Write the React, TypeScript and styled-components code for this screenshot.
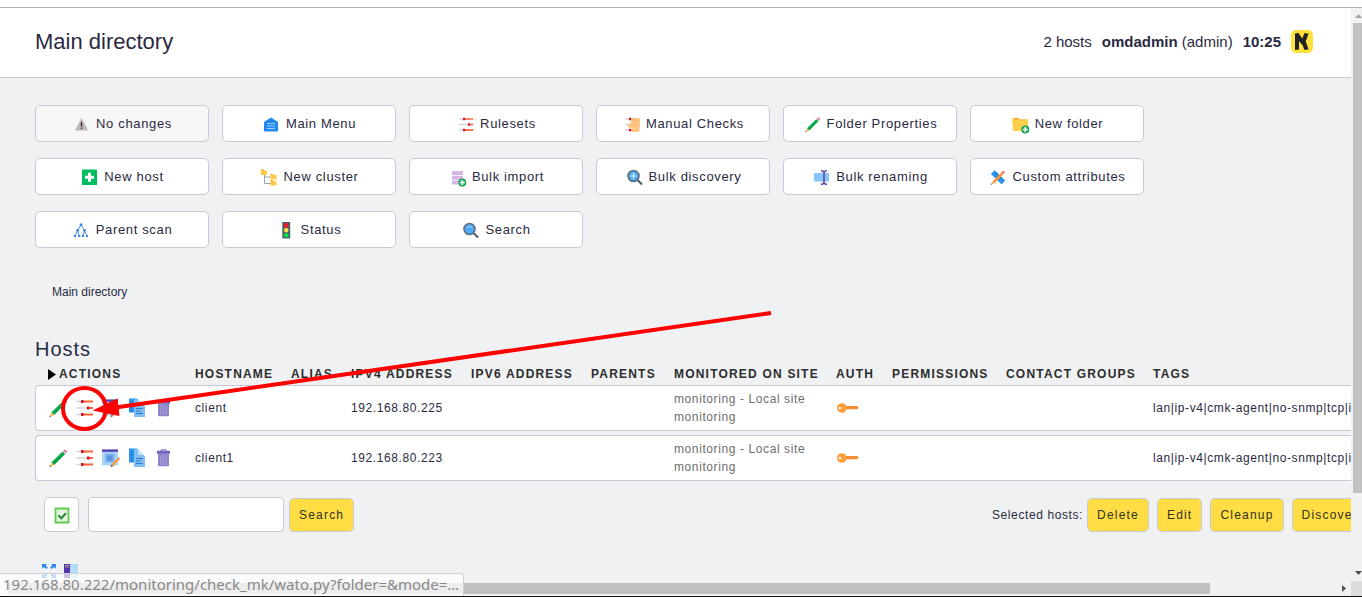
import React from "react";
import styled, { createGlobalStyle } from "styled-components";

const ink = "#2a2a42";
const line = "#c8c9d8";

const GlobalStyle = createGlobalStyle`
  * { box-sizing: border-box; }
  body {
    margin: 0;
    background: #eff1f3;
    color: ${ink};
    font: 12px/16px "Liberation Sans", Arial, sans-serif;
  }
  a { color: inherit; text-decoration: none; }
  button, input { font: inherit; color: inherit; }
`;

const Page = styled.div`
  position: relative;
  min-height: 100vh;
  display: flex;
  flex-direction: column;
  border-bottom: 1px solid #111;
  overflow: hidden;
`;

const WindowEdge = styled.div`
  height: 8px;
  background: #fff;
  border-bottom: 1px solid #b1b1b1;
`;

const Frame = styled.div`
  flex: 1;
  display: grid;
  grid-template-columns: minmax(0, 1fr) 11px;
  grid-template-rows: 1fr 15px;
`;

const Content = styled.main`
  overflow: hidden;
`;

const VerticalBar = styled.div`
  display: flex;
  flex-direction: column;
  align-items: flex-start;
  overflow: hidden;
  background: #f1f1f1;
`;

const VerticalThumb = styled.div`
  width: 9px;
  height: 82%;
  margin-left: 2px;
  background: #c1c1c1;
`;

const HorizontalBar = styled.div`
  display: flex;
  align-items: center;
  background: #f1f1f1;
`;

const HorizontalThumb = styled.div`
  width: 89%;
  height: 11px;
  margin-left: 8px;
  background: #c1c1c1;
`;

const ScrollArrow = styled.svg<{ $push?: boolean }>`
  display: block;
  flex: none;
  width: 15px;
  height: 15px;
  ${(p) => p.$push && "margin-top: auto;"}
`;

const RightArrow = styled(ScrollArrow)`
  margin-left: auto;
`;

const Corner = styled.div`
  background: #dcdcdc;
`;

const Header = styled.header`
  display: flex;
  align-items: center;
  justify-content: space-between;
  height: 70px;
  padding: 0 38px 2px 35px;
  background: #fff;
  border-bottom: 1px solid ${line};
`;

const Title = styled.h1`
  margin: 0;
  font-size: 22px;
  line-height: 28px;
  font-weight: normal;
`;

const UserInfo = styled.div`
  display: flex;
  align-items: center;
  gap: 10px;
  font-size: 15px;
  line-height: 18px;
`;

const Logo = styled.svg`
  width: 22px;
  height: 23px;
`;

const Section = styled.div`
  padding: 27px 35px 0;
`;

const Toolbar = styled.nav`
  display: flex;
  flex-wrap: wrap;
  gap: 16px 13px;
`;

const ToolLink = styled.a<{ $muted?: boolean }>`
  display: flex;
  align-items: center;
  justify-content: center;
  gap: 3px;
  width: 174px;
  height: 37px;
  padding-left: 1px;
  border: 1px solid ${line};
  border-radius: 5px;
  background: ${(p) => (p.$muted ? "#f7f7f7" : "#fff")};
  font-size: 13px;
  letter-spacing: 0.05em;
`;

const Icon20 = styled.svg`
  display: block;
  flex: none;
  width: 20px;
  height: 20px;
`;

const KeyIcon = styled.svg`
  display: block;
  width: 24px;
  height: 20px;
`;

const Breadcrumb = styled.nav`
  margin: 36px 17px 0;
`;

const Heading = styled.h2`
  margin: 37px 0 0;
  font-size: 20px;
  line-height: 24px;
  font-weight: normal;
  letter-spacing: 0.05em;
`;

const HostPanel = styled.form`
  width: max-content;
  letter-spacing: 0.05em;
`;

const HostTable = styled.table`
  table-layout: fixed;
  width: 1340px;
  border-collapse: separate;
  border-spacing: 0 4px;
`;

const HeadCell = styled.th`
  padding: 2px 0 0 16px;
  height: 16px;
  color: #2d2d2d;
  text-align: left;
  white-space: nowrap;
  line-height: 14px;
  letter-spacing: 0.1em;
`;

const ActionsHead = styled.span`
  display: flex;
  align-items: center;
  gap: 3px;
  margin-left: -3px;
`;

const Triangle = styled.svg`
  width: 8px;
  height: 11px;
`;

const Cell = styled.td<{ $soft?: boolean }>`
  height: 46px;
  padding: 0 0 0 16px;
  background: #fff;
  border: solid ${line};
  border-width: 1px 0;
  white-space: nowrap;
  line-height: 18px;
  color: ${(p) => (p.$soft ? "#6e6e6e" : ink)};
  &:first-child {
    padding-left: 12px;
    border-left-width: 1px;
    border-radius: 4px 0 0 4px;
  }
  &:last-child {
    border-right-width: 1px;
    border-radius: 0 4px 4px 0;
  }
`;

const RowActions = styled.div`
  display: flex;
  gap: 6px;
`;

const PanelFooter = styled.div`
  display: flex;
  align-items: center;
  justify-content: space-between;
  padding: 12px 0 0 9px;
`;

const FooterGroup = styled.div<{ $gap: number }>`
  display: flex;
  align-items: center;
  gap: ${(p) => p.$gap}px;
`;

const IconButton = styled.button`
  display: flex;
  align-items: center;
  justify-content: center;
  width: 35px;
  height: 35px;
  margin-right: 4px;
  padding: 0;
  border: 1px solid ${line};
  border-radius: 5px;
  background: #fff;
`;

const SearchInput = styled.input`
  width: 196px;
  height: 35px;
  padding: 0 8px;
  border: 1px solid ${line};
  border-radius: 4px;
  background: #fff;
`;

const YellowButton = styled.button`
  height: 34px;
  padding: 0 9px;
  border: 1px solid ${line};
  border-radius: 5px;
  background: #ffdd44;
  color: #33331f;
  letter-spacing: 0.1em;
`;

const Selected = styled.span`
  margin-right: -4px;
`;

const PageTools = styled.div`
  display: flex;
  gap: 8px;
  padding: 32px 0 0 7px;
`;

const PageToolIcon = styled.svg`
  display: block;
  width: 14px;
  height: 14px;
`;

const LinkStatus = styled.div`
  position: absolute;
  left: 0;
  bottom: 0;
  height: 23px;
  padding: 0 4px 0 3px;
  border: solid #d0d0d4;
  border-width: 1px 1px 0 0;
  border-radius: 0 4px 0 0;
  background: rgba(255, 255, 255, 0.7);
  color: #888;
  font: 15px/20px "Noto Sans", sans-serif;
  white-space: nowrap;
`;

const Annotation = styled.svg`
  position: absolute;
  left: 0;
  top: 0;
  width: 800px;
  height: 440px;
  pointer-events: none;
`;

const Sliders = () => (
  <g>
    <path d="M2.500 3.500h6M2.500 10h10M2.500 16.500h5" stroke="#cbd6da" strokeWidth="1.7" />
    <path d="M8.500 3.500H19M14 10h5M8 16.500h11" stroke="#ff6236" strokeWidth="2" />
    <path d="M7 2h2.500v3H7zM12.800 8.500h2.500v3h-2.500zM7 15h2.500v3H7z" fill="#d5132b" />
  </g>
);

const Pencil = () => (
  <g>
    <path d="M3.500 14.300 14.600 3.400l2.600 2.500L6.300 17z" fill="#0aac50" />
    <path d="m5.800 15.800 10.500-10.400" stroke="#078c44" strokeWidth=".8" />
    <path d="m14.300 3.700 1.200-1.200 2.600 2.500-1.200 1.200z" fill="#b7c0c5" />
    <path d="m15.500 2.500 1-1q2.500.4 2.500 2.700l-.9.800z" fill="#f0728a" />
    <path d="M3.500 14.300 1.800 18.700 6.300 17z" fill="#efb84e" />
    <path d="m2.200 17.500-.9 1.700 1.900-.7z" fill="#333" />
  </g>
);

const Plus = () => (
  <g>
    <circle cx="13.300" cy="15.500" r="4" fill="#12a652" />
    <path d="M13.300 13v5M10.800 15.500h5" stroke="#fff" strokeWidth="1.700" />
  </g>
);

const Lens = () => (
  <g>
    <path d="m11 12.500 5 5" stroke="#455a64" strokeWidth="2" />
    <circle cx="7.500" cy="9" r="5.500" fill="#50a9f5" stroke="#60717b" strokeWidth="1.600" />
  </g>
);

const drawings: Record<string, React.ReactNode> = {
  warning: (
    <g>
      <path d="m8.500 4.500 6.200 11.700H2.300z" fill="#bfb6b8" stroke="#bfb6b8" strokeLinejoin="round" strokeWidth=".6" />
      <path d="M8.500 8v4.500M8.500 13.500v1.500" stroke="#332b2e" strokeWidth="1.300" />
    </g>
  ),
  home: (
    <g>
      <path d="M1 8 8 3.500 15 8v8.500q0 1-1 1H2q-1 0-1-1z" fill="#2188ee" />
      <path d="M4 9.500h8M4 12h8M4 14.500h8" stroke="#9fd0fa" strokeWidth="1" />
    </g>
  ),
  rulesets: <Sliders />,
  rulesetsSmall: (
    <g transform="translate(0 2) scale(.85)">
      <Sliders />
    </g>
  ),
  manual: (
    <g>
      <g transform="translate(0 2) scale(.85)">
        <Sliders />
      </g>
      <rect x="8" y="4" width="9" height="10" rx="2" fill="#ffc585" />
      <rect x="8.500" y="9" width="8" height="9" rx="2" fill="#ffc585" />
      <rect x="5" y="9.500" width="6" height="4.500" rx="2" fill="#ffc585" />
      <path d="M10.200 5v3.500M12.500 4.500v4M14.800 5v3.500M10.500 11h5" stroke="#f8ab62" strokeWidth=".6" />
    </g>
  ),
  pencil: <Pencil />,
  pencilSmall: (
    <g transform="translate(0 2) scale(.85)">
      <Pencil />
    </g>
  ),
  folder: (
    <g>
      <path d="M1 4h5.500L8 5.500h8V10H1z" fill="#ff9f2e" />
      <path d="M0 5.500h16V17H1z" fill="#ffce4a" />
      <Plus />
    </g>
  ),
  newHost: (
    <g>
      <path d="M1 2.500h15V18H1z" fill="#00bd5f" />
      <path d="M8.500 5.700v9M4 10.200h9" stroke="#fff" strokeWidth="3" />
    </g>
  ),
  cluster: (
    <g transform="translate(1 .5)">
      <path d="M3.500 7v9H10M3.500 9.500H10" stroke="#90a4ae" fill="none" />
      <path d="M0 2h2.500l.8 1H6v4.500H0zM9.500 6.500H12l.8 1H15.500V12h-6zM9.500 12.700H12l.8 1h2.700V18h-6z" fill="#ffcb45" />
      <path d="M0 2h2.500v1H0zM9.500 6.500H12v1H9.500zM9.500 12.700H12v1H9.500z" fill="#f8a838" />
    </g>
  ),
  import: (
    <g>
      <path d="M3 4h11v4H3zM3 8.700h11v4H3zM3 13.400h11v4.200H3z" fill="#d5b6e6" />
      <Plus />
    </g>
  ),
  discovery: (
    <g>
      <Lens />
      <path d="M7.500 6v6M4.500 9h6" stroke="#def1ff" strokeWidth="1.200" />
    </g>
  ),
  rename: (
    <g>
      <path d="M1 6h15v8.500H1z" fill="#86c5f5" />
      <path d="M8 3.700q3 0 3 2 0-2 3-2M11 5v11M8 17.200q3 0 3-2 0 2 3 2" stroke="#5f45b2" fill="none" strokeWidth="1.600" />
    </g>
  ),
  attributes: (
    <g transform="translate(0 1.300) scale(.92)">
      <path d="m1 6.200 4-4 11.500 11-4 4.200z" fill="#2c92ec" />
      <path d="m6 4 1.500 1.500M8 6l1 1M11.500 9.500 13 11" stroke="#1266b8" />
      <path d="M3 14 12.800 4l2.200 2L5.200 16.200z" fill="#ff9838" />
      <path d="m12.800 4 1.300-1.400q2.300.4 2.200 2.200L15 6z" fill="#f0728a" />
      <path d="M3 14 .8 18l4.400-1.800z" fill="#e5b64c" />
      <path d="m1.700 16.400-.9 1.600 1.800-.7z" fill="#333" />
    </g>
  ),
  scan: (
    <g>
      <path d="M8 5 4.500 10.500 2 16M4.800 10.500l1.400 5.500M8 5l3.500 5.500-1.600 5.500M11.500 10.500l2.300 5.500" stroke="#4a8fe7" fill="none" />
      <path d="M6.700 3.500h2.600v2.600H6.700zM3.500 9h2.300v2.600H3.500zM10.300 9h2.300v2.600h-2.300zM1 15h2v2H1zM5.300 15h2v2h-2zM8.900 15h2v2h-2zM12.900 15h2v2h-2z" fill="#3580e4" />
    </g>
  ),
  traffic: (
    <g>
      <path d="M4.300 2H12.200v16.500H4.300z" fill="#4d626d" />
      <circle cx="8.250" cy="5.400" r="2.300" fill="#fa1828" />
      <circle cx="8.250" cy="10.300" r="2.200" fill="#ffe548" />
      <circle cx="8.250" cy="15.200" r="2.300" fill="#00df42" />
    </g>
  ),
  search: (
    <g>
      <Lens />
      <path d="M4.800 7.500q2.700-2.500 5.400 0" stroke="#a7daff" strokeWidth="1" fill="none" />
    </g>
  ),
  windowEdit: (
    <g>
      <path d="M2 1.500h16v16H2z" fill="#a9d7fa" />
      <path d="M2 1.500h16v2.300H2z" fill="#553fb1" />
      <path d="M5 5.500h9.500v9H5z" fill="#7fb2ee" />
      <path d="M7 7.500h5.500v5.500H7z" fill="#5c97e2" />
      <path d="m11.500 16.200 6-6.200 1.900 1.700-6.200 6.300z" fill="#ff9c3e" />
      <path d="m17.500 10 1-1 1.500 1.700-.7 1z" fill="#ec7890" />
      <path d="m11.500 16.200-1.200 3.200 2.900-1.400z" fill="#6c5842" />
    </g>
  ),
  copy: (
    <g transform="translate(1)">
      <path d="M2 .500h8v14H2z" fill="#2d94ee" />
      <path d="M4 4h1.500M4 7h1.500M4 10h1.500M4 13h1.500" stroke="#1360b2" />
      <path d="M7 5V1.500l4-.5 7 7.500v10.500H7z" fill="#7fbff4" />
      <path d="M11 1v6h5.500z" fill="#c9e7ff" />
      <path d="M9 10.500h7M9 13h4.500M9 15.500h7" stroke="#2f78c4" strokeWidth="1.200" />
    </g>
  ),
  trash: (
    <g transform="translate(1)">
      <path d="M8 3V1.800h5V3" stroke="#7465bd" fill="none" />
      <path d="M4 2.800h13v3H4z" fill="#7163bb" />
      <path d="M5 6h11v11q0 1.300-1.300 1.300H6.300Q5 18.300 5 17z" fill="#8d82cc" />
      <path d="M7.800 7v10M10.500 7v10M13.200 7v10" stroke="#aaa2db" />
    </g>
  ),
  key: (
    <g>
      <path d="M9 8h12.300l1.200 1.500-1.200 2-1.300-.7-1.300.9-1.300-.9-1.300.9-1.300-.9-1.300.9-1.300-.9L9 12z" fill="#f28c32" />
      <circle cx="5.800" cy="10" r="4.800" fill="#ff9d3b" />
      <circle cx="3.900" cy="10" r="1.300" fill="#fff" />
    </g>
  ),
  check: (
    <g>
      <path d="M3.500 3.500h13v14h-13z" fill="#e2f5dc" stroke="#62ca50" strokeWidth="1.800" />
      <path d="m6.300 10.300 3 3 4.700-5" stroke="#2b873b" strokeWidth="2" fill="none" />
    </g>
  ),
};

const Icon = ({ name }: { name: string }) => (
  <Icon20 viewBox="0 0 20 20" aria-hidden="true">
    {drawings[name]}
  </Icon20>
);

const tools = [
  ["warning", "No changes"],
  ["home", "Main Menu"],
  ["rulesetsSmall", "Rulesets"],
  ["manual", "Manual Checks"],
  ["pencilSmall", "Folder Properties"],
  ["folder", "New folder"],
  ["newHost", "New host"],
  ["cluster", "New cluster"],
  ["import", "Bulk import"],
  ["discovery", "Bulk discovery"],
  ["rename", "Bulk renaming"],
  ["attributes", "Custom attributes"],
  ["scan", "Parent scan"],
  ["traffic", "Status"],
  ["search", "Search"],
];

const columns: [string, number][] = [
  ["Actions", 144],
  ["HOSTNAME", 96],
  ["ALIAS", 60],
  ["IPV4 ADDRESS", 120],
  ["IPV6 ADDRESS", 120],
  ["PARENTS", 83],
  ["MONITORED ON SITE", 162],
  ["AUTH", 56],
  ["PERMISSIONS", 114],
  ["CONTACT GROUPS", 147],
  ["TAGS", 238],
];

const rowActions = [
  ["pencil", "Edit properties"],
  ["rulesets", "Parameters"],
  ["windowEdit", "Edit services"],
  ["copy", "Clone"],
  ["trash", "Delete host"],
];

const hosts = [
  { name: "client", ip: "192.168.80.225" },
  { name: "client1", ip: "192.168.80.223" },
];

export default function App() {
  return (
    <Page>
      <GlobalStyle />
      <WindowEdge />
      <Frame>
        <Content>
          <Header>
            <Title>Main directory</Title>
            <UserInfo>
              <span>2 hosts</span>
              <span>
                <b>omdadmin</b> (admin)
              </span>
              <b>10:25</b>
              <Logo viewBox="0 0 22 23" aria-label="Checkmk">
                <rect width="22" height="23" rx="5" fill="#ffe03c" />
                <path d="M4 3.500 7.500 3l3.700 5.500v6.500L8 11v8.500l-4 .5z" fill="#222" />
                <path d="m13.500 3 4 .8-2.800 7.700 2.800 7.700-4 .8-2.800-7v-3z" fill="#222" />
              </Logo>
            </UserInfo>
          </Header>
          <Section>
            <Toolbar aria-label="Folder actions">
              {tools.map(([icon, label], i) => (
                <ToolLink key={label} href="#" $muted={i === 0}>
                  <Icon name={icon} />
                  {label}
                </ToolLink>
              ))}
            </Toolbar>
            <Breadcrumb aria-label="Folder path">
              <a href="#">Main directory</a>
            </Breadcrumb>
            <Heading>Hosts</Heading>
            <HostPanel onSubmit={(e) => e.preventDefault()}>
              <HostTable>
                <colgroup>
                  {columns.map(([label, width]) => (
                    <col key={label} width={width} />
                  ))}
                </colgroup>
                <thead>
                  <tr>
                    {columns.map(([label], i) => (
                      <HeadCell key={label} scope="col">
                        {i === 0 ? (
                          <ActionsHead>
                            <Triangle viewBox="0 0 8 11" aria-hidden="true">
                              <path d="M0 0 8 5.500 0 11z" />
                            </Triangle>
                            ACTIONS
                          </ActionsHead>
                        ) : (
                          label
                        )}
                      </HeadCell>
                    ))}
                  </tr>
                </thead>
                <tbody>
                  {hosts.map((host) => (
                    <tr key={host.name}>
                      <Cell>
                        <RowActions>
                          {rowActions.map(([icon, label]) => (
                            <a key={icon} href="#" aria-label={label}>
                              <Icon name={icon} />
                            </a>
                          ))}
                        </RowActions>
                      </Cell>
                      <Cell>
                        <a href="#">{host.name}</a>
                      </Cell>
                      <Cell />
                      <Cell>{host.ip}</Cell>
                      <Cell />
                      <Cell />
                      <Cell $soft>
                        monitoring - Local site
                        <br />
                        monitoring
                      </Cell>
                      <Cell>
                        <KeyIcon viewBox="0 0 24 20" aria-label="Key">
                          {drawings.key}
                        </KeyIcon>
                      </Cell>
                      <Cell />
                      <Cell />
                      <Cell>lan|ip-v4|cmk-agent|no-snmp|tcp|ip-v4</Cell>
                    </tr>
                  ))}
                </tbody>
              </HostTable>
              <PanelFooter>
                <FooterGroup $gap={5}>
                  <IconButton type="button" aria-label="Select all hosts">
                    <Icon name="check" />
                  </IconButton>
                  <SearchInput type="text" aria-label="Search hosts" />
                  <YellowButton type="submit">Search</YellowButton>
                </FooterGroup>
                <FooterGroup $gap={8}>
                  <Selected>Selected hosts:</Selected>
                  <YellowButton type="button">Delete</YellowButton>
                  <YellowButton type="button">Edit</YellowButton>
                  <YellowButton type="button">Cleanup</YellowButton>
                  <YellowButton type="button">Discovery</YellowButton>
                </FooterGroup>
              </PanelFooter>
            </HostPanel>
            <PageTools>
              <PageToolIcon viewBox="0 0 14 14" aria-label="Expand">
                <path d="M0 0h5L3.600 1.400l2.200 2.200-1.500 1.500L2 3 .2 4.800zM14 0H9l1.400 1.400-2.200 2.200 1.500 1.500L12 3l1.800 1.800zM0 14h5l-1.400-1.400 2.200-2.200-1.500-1.500L2 11 .2 9.200zM14 14H9l1.400-1.400-2.200-2.200 1.500-1.500L12 11l1.800-1.800z" fill="#2388e8" />
              </PageToolIcon>
              <PageToolIcon viewBox="0 0 14 14" aria-label="Sidebar">
                <path d="M0 0h6v14H0z" fill="#5236ab" />
                <path d="M6 0h8v14H6z" fill="#b3dcfb" />
                <path d="M1 1.500h4M1 3h4" stroke="#c5b86a" strokeWidth=".8" />
              </PageToolIcon>
            </PageTools>
          </Section>
        </Content>
        <VerticalBar>
          <ScrollArrow viewBox="0 0 15 15" aria-hidden="true">
            <path d="M4 10 7.500 6 11 10z" fill="#a3a3a3" />
          </ScrollArrow>
          <VerticalThumb />
          <ScrollArrow $push viewBox="0 0 15 15" aria-hidden="true">
            <path d="M4 5h7L7.500 9z" fill="#505050" />
          </ScrollArrow>
        </VerticalBar>
        <HorizontalBar>
          <HorizontalThumb />
          <RightArrow viewBox="0 0 15 15" aria-hidden="true">
            <path d="M6 4v7l4-3.500z" fill="#505050" />
          </RightArrow>
        </HorizontalBar>
        <Corner />
      </Frame>
      <LinkStatus>192.168.80.222/monitoring/check_mk/wato.py?folder=&amp;mode=…</LinkStatus>
      <Annotation viewBox="0 0 800 440" aria-hidden="true">
        <ellipse cx="84.500" cy="408.500" rx="21.500" ry="20.500" fill="none" stroke="#f00" strokeWidth="4" />
        <path d="M771 313 112 408" stroke="#f00" strokeWidth="4" />
        <path d="m92.500 410.500 25-12 2 17.500z" fill="#f00" />
      </Annotation>
    </Page>
  );
}
